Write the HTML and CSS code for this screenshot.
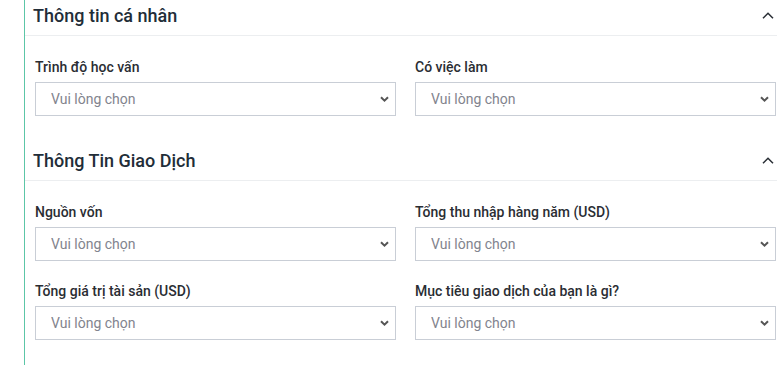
FILE: index.html
```html
<!DOCTYPE html>
<html lang="vi">
<head>
<meta charset="UTF-8" />
<meta name="viewport" content="width=device-width, initial-scale=1.0" />
<title>Thông tin tài khoản</title>
<link rel="stylesheet" href="styles.css">
</head>
<body>

<div class="panel">

  <div class="section">
    <div class="section-head">
      <h2>Thông tin cá nhân</h2>
      <svg class="toggle" width="12" height="7" viewBox="0 0 12 7"><path d="M1 6.2 L6 1.2 L11 6.2" fill="none" stroke="#2a2f36" stroke-width="1.5"/></svg>
    </div>
    <div class="section-body">
      <div class="field">
        <label for="education">Trình độ học vấn</label>
        <div class="select-wrap">
          <select id="education"><option>Vui lòng chọn</option></select>
          <svg class="caret" width="9" height="6" viewBox="0 0 9 6"><path d="M1 1.2 L4.5 4.6 L8 1.2" fill="none" stroke="#555" stroke-width="2"/></svg>
        </div>
      </div>
      <div class="field">
        <label for="employed">Có việc làm</label>
        <div class="select-wrap">
          <select id="employed"><option>Vui lòng chọn</option></select>
          <svg class="caret" width="9" height="6" viewBox="0 0 9 6"><path d="M1 1.2 L4.5 4.6 L8 1.2" fill="none" stroke="#555" stroke-width="2"/></svg>
        </div>
      </div>
    </div>
  </div>

  <div class="section">
    <div class="section-head">
      <h2>Thông Tin Giao Dịch</h2>
      <svg class="toggle" width="12" height="7" viewBox="0 0 12 7"><path d="M1 6.2 L6 1.2 L11 6.2" fill="none" stroke="#2a2f36" stroke-width="1.5"/></svg>
    </div>
    <div class="section-body">
      <div class="field">
        <label for="funds">Nguồn vốn</label>
        <div class="select-wrap">
          <select id="funds"><option>Vui lòng chọn</option></select>
          <svg class="caret" width="9" height="6" viewBox="0 0 9 6"><path d="M1 1.2 L4.5 4.6 L8 1.2" fill="none" stroke="#555" stroke-width="2"/></svg>
        </div>
      </div>
      <div class="field">
        <label for="income">Tổng thu nhập hàng năm (USD)</label>
        <div class="select-wrap">
          <select id="income"><option>Vui lòng chọn</option></select>
          <svg class="caret" width="9" height="6" viewBox="0 0 9 6"><path d="M1 1.2 L4.5 4.6 L8 1.2" fill="none" stroke="#555" stroke-width="2"/></svg>
        </div>
      </div>
      <div class="field">
        <label for="assets">Tổng giá trị tài sản (USD)</label>
        <div class="select-wrap">
          <select id="assets"><option>Vui lòng chọn</option></select>
          <svg class="caret" width="9" height="6" viewBox="0 0 9 6"><path d="M1 1.2 L4.5 4.6 L8 1.2" fill="none" stroke="#555" stroke-width="2"/></svg>
        </div>
      </div>
      <div class="field">
        <label for="goal">Mục tiêu giao dịch của bạn là gì?</label>
        <div class="select-wrap">
          <select id="goal"><option>Vui lòng chọn</option></select>
          <svg class="caret" width="9" height="6" viewBox="0 0 9 6"><path d="M1 1.2 L4.5 4.6 L8 1.2" fill="none" stroke="#555" stroke-width="2"/></svg>
        </div>
      </div>
    </div>
  </div>

</div>

</body>
</html>
```

FILE: styles.css
```css
body {
  margin: 0;
  font-family: Roboto, "Liberation Sans", Arial, sans-serif;
  background: #fff;
  overflow: hidden;
}

.panel {
  margin: -5px 0 0 24px;
  border-left: 1px solid #5cc6a7;
  height: 370px;
}

.section-head {
  height: 40px;
  display: flex;
  align-items: center;
  justify-content: space-between;
  padding: 0 3px 0 8px;
  border-bottom: 1px solid #eceef0;
}

.section-head h2 {
  margin: 0;
  font-size: 18px;
  font-weight: 500;
  color: #222d38;
}

.toggle {
  display: block;
}

.section-body {
  display: grid;
  grid-template-columns: 361px 361px;
  column-gap: 19px;
  row-gap: 20px;
  padding: 21px 0 24px 10px;
}

.field label {
  display: block;
  height: 20px;
  line-height: 20px;
  margin-bottom: 5px;
  font-size: 14px;
  font-weight: 500;
  color: #2a2d33;
}

.select-wrap {
  position: relative;
}

select {
  display: block;
  width: 100%;
  height: 34px;
  padding: 0 24px 0 15px;
  border: 1px solid #c9ced6;
  border-radius: 0;
  background: #fff;
  font-family: inherit;
  font-size: 14px;
  color: #82848e;
  appearance: none;
  -webkit-appearance: none;
}

.caret {
  position: absolute;
  right: 7px;
  top: 14px;
  pointer-events: none;
}
```
